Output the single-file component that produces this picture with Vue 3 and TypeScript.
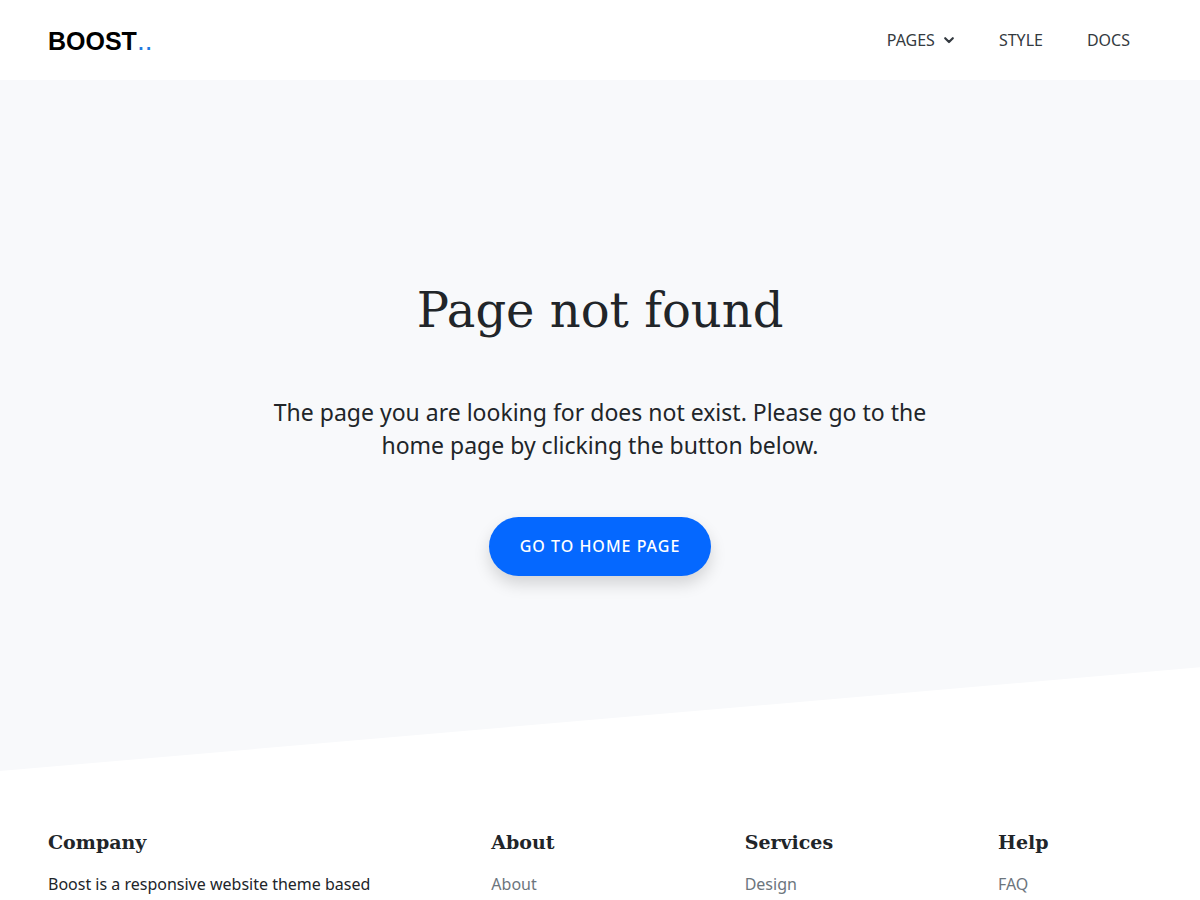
<script setup lang="ts">
interface NavItem {
  label: string
  menu?: boolean
}

interface LinkColumn {
  title: string
  links: string[]
}

const navItems: NavItem[] = [
  { label: 'PAGES', menu: true },
  { label: 'STYLE' },
  { label: 'DOCS' },
]

const columns: LinkColumn[] = [
  { title: 'About', links: ['About'] },
  { title: 'Services', links: ['Design'] },
  { title: 'Help', links: ['FAQ'] },
]
</script>

<template>
  <div class="page">
    <header class="header">
      <a class="logo" href="#">BOOST<span class="dots">..</span></a>
      <nav class="nav">
        <template v-for="item in navItems" :key="item.label">
          <button v-if="item.menu" class="nav-item" type="button" aria-haspopup="true">
            {{ item.label }}
            <svg class="chevron" viewBox="0 0 12 8" width="12" height="8" aria-hidden="true">
              <path d="M2.2 2.2 L6 6 L9.8 2.2" fill="none" stroke="currentColor" stroke-width="2.2" stroke-linecap="round" stroke-linejoin="round" />
            </svg>
          </button>
          <a v-else class="nav-item" href="#">{{ item.label }}</a>
        </template>
      </nav>
    </header>

    <main class="hero">
      <h1>Page not found</h1>
      <p class="lead">
        The page you are looking for does not exist. Please go to the home page by clicking the button below.
      </p>
      <a class="cta" href="#">GO TO HOME PAGE</a>
    </main>

    <footer class="footer">
      <section>
        <h2>Company</h2>
        <p>Boost is a responsive website theme based</p>
      </section>
      <section v-for="column in columns" :key="column.title">
        <h2>{{ column.title }}</h2>
        <ul>
          <li v-for="link in column.links" :key="link">
            <a href="#">{{ link }}</a>
          </li>
        </ul>
      </section>
    </footer>
  </div>
</template>

<style>
body {
  margin: 0;
  background: #fff;
}
</style>

<style scoped>
.page {
  color: #212529;
  font-family: "Noto Sans", "Open Sans", sans-serif;
  font-size: 16px;
  line-height: 24px;
}

.page a {
  text-decoration: none;
}

.header {
  display: flex;
  align-items: center;
  justify-content: space-between;
  box-sizing: border-box;
  height: 80px;
  padding: 0 70px 0 48px;
}

.logo {
  padding-top: 2px;
  color: #000;
  font: bold 25px/32px "Liberation Sans", Arial, sans-serif;
}

.dots {
  color: #1f7ae0;
  font-size: 28px;
  font-weight: 400;
}

.nav {
  display: flex;
  gap: 44px;
}

.nav-item {
  display: flex;
  align-items: center;
  gap: 8px;
  padding: 0;
  border: 0;
  background: none;
  color: #343a40;
  font: 16px/24px "Noto Sans", "Open Sans", sans-serif;
  cursor: pointer;
}

.hero {
  display: flex;
  flex-direction: column;
  align-items: center;
  padding: 192px 24px 195px;
  background: #f8f9fb;
  clip-path: polygon(0 0, 100% 0, 100% 85%, 0 100%);
}

h1 {
  margin: 0 0 48px;
  font: 400 48px/76px "DejaVu Serif", serif;
  text-align: center;
}

.lead {
  max-width: 690px;
  margin: 0 0 55px;
  font-size: 23px;
  line-height: 33px;
  text-align: center;
}

.cta {
  padding: 17px 31px;
  border-radius: 30px;
  background: #0568ff;
  box-shadow: 0 8px 16px rgba(0, 0, 0, 0.15);
  color: #fff;
  font-size: 16px;
  font-weight: 500;
  line-height: 25px;
  letter-spacing: 1px;
}

.footer {
  display: grid;
  grid-template-columns: 7fr 4fr 4fr 154px;
  padding: 57px 48px 0;
}

h2 {
  margin: 0 0 16px;
  font: bold 19px/28px "DejaVu Serif", serif;
}

.footer p,
.footer ul {
  margin: 0;
  padding: 0;
  list-style: none;
}

.footer li a {
  color: #6c757d;
}
</style>
